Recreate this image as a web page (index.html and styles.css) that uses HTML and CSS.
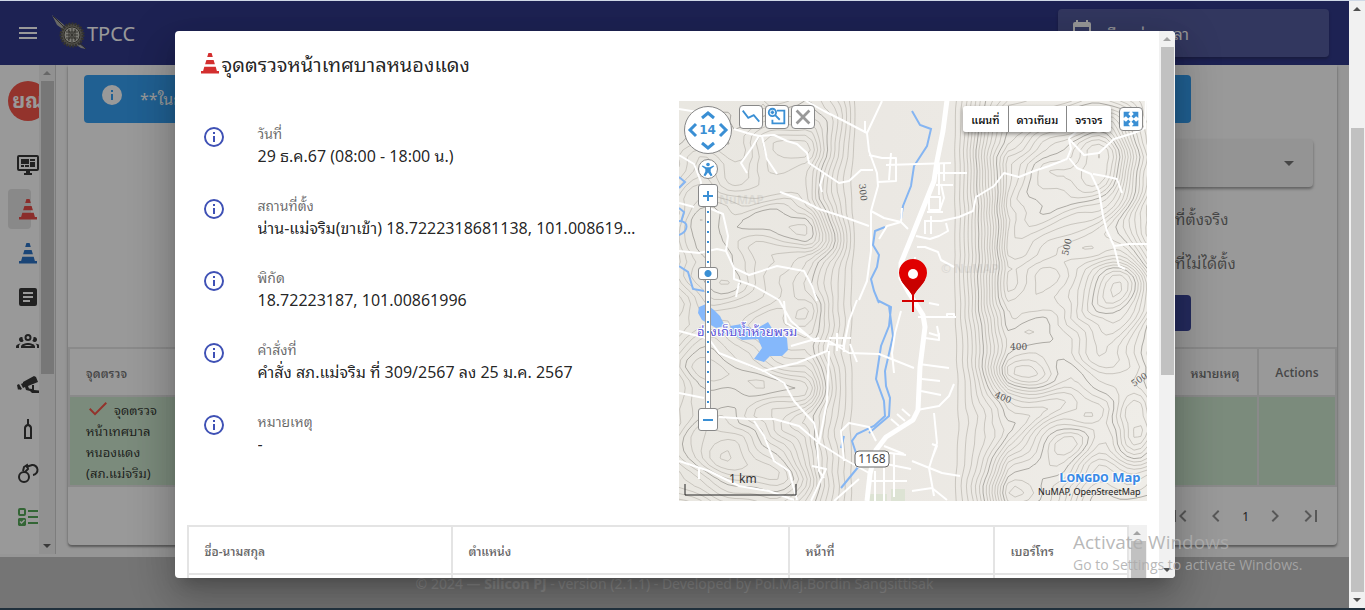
FILE: index.html
```html
<!DOCTYPE html>
<html lang="th">
<head>
<meta charset="utf-8">
<title>TPCC</title>
<link rel="stylesheet" href="styles.css">
</head>
<body>
<svg class="defs" aria-hidden="true">
  <symbol id="cone" viewBox="0 0 24 24"><path d="M10.400 2h3.200l1.200 4H9.200zM8.400 9h7.200l1.300 4.200H7.100zM6.300 15.700h11.400l1.200 4.300H21v2.500H3V20h2.100z"/></symbol>
  <symbol id="info" viewBox="0 0 24 24"><path d="M11 9h2V7h-2m1 13c-4.410 0-8-3.590-8-8s3.590-8 8-8 8 3.590 8 8-3.590 8-8 8m0-18a10 10 0 1 0 0 20 10 10 0 0 0 0-20m-1 15h2v-6h-2z"/></symbol>
  <symbol id="up" viewBox="0 0 16 16"><path d="M4 10h8L8 6z"/></symbol>
  <symbol id="down" viewBox="0 0 16 16"><path d="M4 6h8l-4 4z"/></symbol>
</svg>
<div class="window">
  <div class="app">
    <header class="bar">
      <button class="menu" aria-label="Menu"><svg viewBox="0 0 24 24"><path d="M3 6h18v2H3zm0 5h18v2H3zm0 5h18v2H3z"/></svg></button>
      <svg class="logo" viewBox="0 0 36 36">
        <path d="M0 0l11 9 4 4-3 2-7-5zM26 28l8 6-5-1-6-4z" fill="#a4a4a0"/>
        <path d="M1 1l33 33" stroke="#3a3830" stroke-width="1"/>
        <circle cx="20" cy="20" r="11" fill="#77756a" stroke="#45433c" stroke-width="3" stroke-dasharray="2 1"/>
        <circle cx="20" cy="20" r="8" fill="#c9c7bc" stroke="#3a382f"/>
        <path d="M14 17h12M14 20h12M14 23h12M17 14v12M20 13v14M23 14v12M16 15l8 10M24 15l-8 10" stroke="#47443c"/>
      </svg>
      <span class="brand">TPCC</span>
      <button class="date"><svg viewBox="0 0 24 24"><path d="M19 19H5V8h14m-3-7v2H8V1H6v2H5a2 2 0 0 0-2 2v14a2 2 0 0 0 2 2h14a2 2 0 0 0 2-2V5a2 2 0 0 0-2-2h-1V1m-1 11h-5v5h5z"/></svg><span>เลือกช่วงเวลา</span></button>
    </header>
    <div class="body">
      <nav class="drawer">
        <div class="items">
          <div class="avatar">ยณ</div>
          <a href="#" aria-label="Dashboard"><svg viewBox="0 0 24 24"><path d="M21 2H3a2 2 0 0 0-2 2v12a2 2 0 0 0 2 2h7v2H8v2h8v-2h-2v-2h7a2 2 0 0 0 2-2V4a2 2 0 0 0-2-2m0 14H3V4h18zM5 6h8v5H5zm9 0h5v2h-5zm0 3h5v5h-5zm-9 3h3v2H5zm4 0h4v2H9z"/></svg></a>
          <a href="#" class="active" aria-label="จุดตรวจ"><svg class="red"><use href="#cone"/></svg></a>
          <a href="#" aria-label="จุดตรวจอื่น"><svg class="blue"><use href="#cone"/></svg></a>
          <a href="#" aria-label="รายงาน"><svg viewBox="0 0 24 24"><path fill-rule="evenodd" d="M5 3h14a2 2 0 0 1 2 2v14a2 2 0 0 1-2 2H5a2 2 0 0 1-2-2V5a2 2 0 0 1 2-2zm2 4v2h10V7zm0 4v2h10v-2zm0 4v2h7v-2z"/></svg></a>
          <a href="#" aria-label="กลุ่ม"><svg viewBox="0 0 24 24"><path d="M12 5a3.500 3.500 0 1 0 0 7 3.500 3.500 0 0 0 0-7m0 2a1.500 1.500 0 1 1 0 3 1.500 1.500 0 0 1 0-3M5.500 8A2.500 2.500 0 0 0 3 10.500c0 .94.53 1.750 1.290 2.180a2.500 2.500 0 0 0 2.420 0c.37-.21.68-.51.91-.87A5.420 5.420 0 0 1 6.500 8.500v-.28C6.200 8.080 5.860 8 5.500 8m13 0c-.36 0-.7.080-1 .22v.28c0 1.200-.39 2.360-1.120 3.310.12.190.25.340.4.490a2.480 2.480 0 0 0 2.930.38A2.500 2.500 0 0 0 18.500 8M12 14c-2.340 0-7 1.170-7 3.500V19h14v-1.500c0-2.330-4.660-3.500-7-3.500m-7.290.55C2.780 14.780 0 15.760 0 17.500V19h3v-1.930c0-1.010.69-1.850 1.710-2.520m14.580 0c1.020.67 1.710 1.510 1.710 2.520V19h3v-1.500c0-1.740-2.780-2.720-4.710-2.950M12 16c1.530 0 3.240.5 4.230 1H7.770c.99-.5 2.700-1 4.230-1"/></svg></a>
          <a href="#" aria-label="กล้อง"><svg viewBox="0 0 24 24"><path d="M7 9l11-6 2 1 2 5-10 4 1 2.500 3 .5v-4h2v5l5 .5V20h-7l-2-2-4-1-1-3-2 .8zM1 12l2-1 3 5-2 1-1-1-1 1zM5 11l2-1 2 4-2 1z"/></svg></a>
          <a href="#" aria-label="แอลกอฮอล์"><svg viewBox="0 0 24 24"><path fill-rule="evenodd" d="M11 2h2v5c2 1 3 2 3 4v11H8V11c0-2 1-3 3-4zm1 7c-1 .5-2 1-2 2.500V20h4v-8.500c0-1.500-1-2-2-2.500z"/></svg></a>
          <a href="#" aria-label="กุญแจมือ"><svg viewBox="0 0 24 24" class="line"><circle cx="8" cy="16" r="5"/><path d="M7 10l1-4 3-2 1 4-3 3M10 6l6-2a5 5 0 1 1 1 10"/></svg></a>
          <a href="#" aria-label="รายการ"><svg viewBox="0 0 24 24" class="green"><path fill-rule="evenodd" d="M4 3h4a2 2 0 0 1 2 2v4a2 2 0 0 1-2 2H4a2 2 0 0 1-2-2V5a2 2 0 0 1 2-2zm0 2v4h4V5zM12 5h10v2H12zM12 11h10v2H12zM12 17h10v2H12zM3 13h6l1 1v6l-1 1H3l-1-1v-6zm.5 4l2 2 3.500-3.500-1-1-2.500 2.500-1-1z"/></svg></a>
        </div>
        <div class="scroll" aria-hidden="true"><svg><use href="#up"/></svg><i class="thumb long"></i><svg class="end"><use href="#down"/></svg></div>
      </nav>
      <main class="main">
        <section class="card">
          <div class="form">
            <div class="alert"><svg viewBox="0 0 24 24"><path d="M13 9h-2V7h2m0 10h-2v-6h2m-1-9a10 10 0 1 0 0 20 10 10 0 0 0 0-20"/></svg><span>**ในการค้นหา</span></div>
            <div class="combo"><select aria-label="สถานี"><option></option></select><svg viewBox="0 0 24 24"><path d="M7 10l5 5 5-5z"/></svg></div>
            <p class="opt">ที่ตั้งจริง</p>
            <p class="opt two">ที่ไม่ได้ตั้ง</p>
            <button class="go" aria-label="ค้นหา"></button>
          </div>
          <table class="list">
            <thead><tr><th class="c1">จุดตรวจ</th><th></th><th class="c3">หมายเหตุ</th><th class="c4">Actions</th></tr></thead>
            <tbody><tr><td><svg viewBox="0 0 24 24"><path d="M21 6.500L9 18.500l-6-6 1.400-1.400L9 15.700 19.600 5.100z"/></svg>จุดตรวจ<br>หน้าเทศบาล<br>หนองแดง<br>(สภ.แม่จริม)</td><td></td><td></td><td></td></tr></tbody>
          </table>
          <div class="pager">
            <button aria-label="First"><svg viewBox="0 0 24 24"><path d="M18.400 16.600L13.800 12l4.600-4.600L17 6l-6 6 6 6zM6 6h2v12H6z"/></svg></button>
            <button aria-label="Previous"><svg viewBox="0 0 24 24"><path d="M15.400 16.600L10.800 12l4.600-4.600L14 6l-6 6 6 6z"/></svg></button>
            <span>1</span>
            <button aria-label="Next"><svg viewBox="0 0 24 24"><path d="M8.600 16.600l4.600-4.600-4.600-4.600L10 6l6 6-6 6z"/></svg></button>
            <button aria-label="Last"><svg viewBox="0 0 24 24"><path d="M5.600 7.400l4.600 4.600-4.600 4.600L7 18l6-6-6-6zM16 6h2v12h-2z"/></svg></button>
          </div>
        </section>
      </main>
    </div>
    <footer class="foot"><span>© 2024 — <b>Silicon PJ</b> - version (2.1.1) - Developed by Pol.Maj.Bordin Sangsittisak</span></footer>
    <div class="overlay">
      <div class="dialog" role="dialog" aria-labelledby="title">
        <div class="pane">
          <h2 id="title"><svg><use href="#cone"/></svg>จุดตรวจหน้าเทศบาลหนองแดง</h2>
          <div class="cols">
            <dl class="facts">
              <div><svg><use href="#info"/></svg><dt>วันที่</dt><dd>29 ธ.ค.67 (08:00 - 18:00 น.)</dd></div>
              <div><svg><use href="#info"/></svg><dt>สถานที่ตั้ง</dt><dd>น่าน-แม่จริม(ขาเข้า) 18.7222318681138, 101.00861996</dd></div>
              <div><svg><use href="#info"/></svg><dt>พิกัด</dt><dd>18.72223187, 101.00861996</dd></div>
              <div><svg><use href="#info"/></svg><dt>คำสั่งที่</dt><dd>คำสั่ง สภ.แม่จริม ที่ 309/2567 ลง 25 ม.ค. 2567</dd></div>
              <div><svg><use href="#info"/></svg><dt>หมายเหตุ</dt><dd>-</dd></div>
            </dl>
            <div class="map">
              <svg class="terrain" viewBox="0 0 468 400" preserveAspectRatio="xMidYMid slice">
                <defs><linearGradient id="land"><stop offset="0" stop-color="#e9e7e1"/><stop offset=".45" stop-color="#ebe8e3"/><stop offset="1" stop-color="#efede8"/></linearGradient></defs>
                <rect width="468" height="400" fill="url(#land)"/>
                <path id="contours" class="contour"/>
                <path id="majors" class="contour major"/>
                <path fill="#dde3d4" d="M190 393h18v7h-18zM212 388h14v12h-14z"/>
                <path class="lake" d="M20 206l7-3 8 6 6 6 5 10-9 2-14-8-4-7zM40 232l14-2-3-5 12-2 12 6 14-8 5 8 14 8 1 12-6 6-12 0-6 6-10-3 8-11-4-9-16 1-7-5z"/>
                <g class="river">
                  <path d="M233 10l8 14 11 4-4 17-13 20-3 20-8 20-2 13M206 126l-10 4-2 14 6 10-2 12-6 12 3 12 5 12M198 199l14 7-2 19-8 20-5 33 8 22 1 15-11 10-17 8-5 7 4 12M210 205l4 30-8 35 1 15 4 12-1 18-20 17M180 365l-18 22M0 76l6 5-6 6M0 107l5 4-3 10M0 120c10 0 10 10 0 14M0 165l9 6 5 17 11 2M165 335l-3 12"/>
                </g>
                <g class="road">
                  <path d="M55 28l13 4 12 3 15-1 13 6 10 3 10 9 2 10 15 10 15 10 10-2 12-11h12M80 35l-8 13-10 14 6 10M83 35l5 23 10 15M145 72l-4 12 2 7M101 91l19 7 20 10 25 8 25 9M0 8l25 4M0 54l15 9 7 18-2 20M0 102l15 4M30 107l14 6 5 22-2 15 8 17 15 7 28-9 27 5 8 15 5 15M0 150l20 2 18-4 9 2M55 167v11l20 7 25 14M60 182l-3 14"/>
                  <path d="M127 0l18 10 20 10 23 12 15-32M188 32l2 18 8 22 1 13-7 25v40l-4 30-8 19M190 54l13 3 14 0v23l-18 1M212 52l-2 27M207 64l65-2M192 110l13 7 17 4 7 7M222 121l1-14M222 121l-14 4-8 13M186 32v-12"/>
                  <path d="M245 120h17l18-4 14-6 3-14 18-11 10-13 15 4 15-6 15-5 18-7 4-10-2-10 15 16 15-2 15-14 20-6 11-5 1-30M390 57l8 10 14 6 8 17 4 25 4 15 7 15 15-2 18 0M435 145l5 20 6 3M414 73l11 2 13 3 5 14M390 37l8-7"/>
                  <path d="M254 72h34M260 62v32M257 84h17M265 62v18M248 111h16M246 121v12M252 115v18M237 135l14 3 9-3 9-5-2-8M238 146h8l13 5 3 8 13 7M236 156v22M248 111l12 0 5-14-3-14M250 96h11v13h-11z"/>
                  <path d="M0 230l30 8 10 14 20 8 25 10 20 12 10 18 20 22 5 20 25 16 25 14M83 270l35-8 30-12 2-10M100 199l12 21 23 20 15 0 20 12 30 1 35 14M178 199l-8 21-5 25-15-2M150 250l-2 50-8 42M40 316l30 2 25 0 25 7 20 17M75 320l10 15 10 25 15 10 8 29M0 292l25 5M0 360l30 10 30 15 30 5 25 9M20 366v12M138 342l2 28 5 7M133 365l14 3-15 32M180 378l-25 22M165 360l-3-30 8-8 20 4 7 14M150 237h22M158 232v18M165 236v15M171 243l7 18M112 245l28-8M105 200l2 22 30 18M215 272l-2-20 3-20 6-22"/>
                  <path d="M239 216h38M250 202l10 2M250 232l10 3-2-10M240 263l30 4M243 278l18 2M242 290l20 4M238 309l22-4 10-10 5-12M255 312l3 30-8 25 5 28M233 360l30 12 18 3M233 390l20-3 15 12M253 343l5 2-6 15M192 360l40 8M195 350l32 4M196 370v30M205 356v44M215 352v44M192 380h36M205 345l20 8M268 217v-4h7v4M220 325l-8-7M226 320l-8-7M231 315l-8-7M246 237l14 2v-7"/>
                </g>
                <path class="highway" d="M268-1l-4 31-6 30-3 20-10 25-12 30-11 27v15l8 15 14 22 2 12-5 40-2 43-5 10-27 17-10 13-6 24-3 27"/>
                <g class="contour-label">
                  <text transform="translate(180 83) rotate(84)">300</text>
                  <text x="331" y="249">400</text>
                  <text transform="translate(315 296) rotate(22)">400</text>
                  <text transform="translate(389 155) rotate(-78)">500</text>
                  <text transform="translate(455 286) rotate(-35)">500</text>
                </g>
                <g class="faint"><text x="40" y="103">NuMAP</text><text x="262" y="172">© NuMAP</text></g>
                <text class="water-name" x="18" y="235">อ่างเก็บน้ำห้วยพรม</text>
                <rect x="176" y="350" width="34" height="16" rx="4" fill="#fff" stroke="#666"/>
                <text class="shield" x="193" y="362">1168</text>
                <path d="M234 196c-3-8-14-15-14-24a14 14 0 0 1 28 0c0 9-11 16-14 24z" fill="#e00000"/>
                <path d="M234 196c-2-6-9-11-12-17l24 0c-3 6-10 11-12 17z" fill="#c80000"/>
                <circle cx="234" cy="173" r="5" fill="#fff"/>
                <path d="M223 200h22M234 190v21" stroke="#d40000" stroke-width="2"/>
                <path class="scale" d="M6 383v11h111v-11"/>
                <text class="km" x="50" y="382">1 km</text>
              </svg>
              <div class="dial"><svg viewBox="0 0 48 48"><path d="M18 12l6-5 6 5M18 37l6 5 6-5M12 18l-6 6 6 6M36 18l6 6-6 6" class="arrows"/></svg><b>14</b></div>
              <button class="person" aria-label="Locate"><svg viewBox="0 0 20 20"><circle cx="10" cy="5" r="2"/><path d="M4 6l4 2h4l4-2 1 1-4 3v3l2 4-2 1-3-4-3 4-2-1 2-4v-3L3 7z"/></svg></button>
              <div class="zoom"><button aria-label="Zoom in"><svg viewBox="0 0 18 20"><path d="M4 10h10M9 5v10"/></svg></button><div class="track"><i></i></div><button aria-label="Zoom out"><svg viewBox="0 0 18 20"><path d="M4 10h10"/></svg></button></div>
              <div class="tools">
                <button aria-label="Line"><svg viewBox="0 0 24 24"><path d="M3 5l6 8 6-3 6 7" fill="none" stroke="#3a8fd4" stroke-width="2"/></svg></button>
                <button aria-label="Zoom area"><svg viewBox="0 0 24 24" class="outline"><path d="M12 5h8v14H7v-4M10 10l5 5"/><circle cx="7" cy="7" r="4"/><path d="M5 7h4M7 5v4"/></svg></button>
                <button aria-label="Clear"><svg viewBox="0 0 24 24"><path d="M5 5l14 14M19 5L5 19" stroke="#999" stroke-width="3"/></svg></button>
              </div>
              <div class="modes">
                <div class="seg"><button>แผนที่</button><button>ดาวเทียม</button><button>จราจร</button></div>
                <button class="full" aria-label="Full screen"><svg viewBox="0 0 24 24"><path d="M4 4h7L9 6.500l2.500 2.500L9 11.500 6.500 9 4 11zM20 4h-7l2 2.500L12.500 9l2.500 2.500L17.500 9l2.500 2zM4 20h7l-2-2.500 2.500-2.500L9 12.500 6.500 15 4 13zM20 20h-7l2-2.500-2.500-2.500 2.500-2.500 2.500 2.500 2.500-2z"/></svg></button>
              </div>
              <div class="credit"><b><span>Longdo</span> Map</b><small>NuMAP, OpenStreetMap</small></div>
            </div>
          </div>
          <div class="people">
            <table>
              <thead><tr><th class="w1">ชื่อ-นามสกุล</th><th class="w2">ตำแหน่ง</th><th class="w3">หน้าที่</th><th>เบอร์โทร</th></tr></thead>
              <tbody><tr><td></td><td></td><td></td><td></td></tr></tbody>
            </table>
            <div class="scroll" aria-hidden="true"><svg><use href="#up"/></svg><i class="thumb"></i></div>
          </div>
        </div>
        <div class="scroll" aria-hidden="true"><svg><use href="#up"/></svg><i class="thumb long"></i><svg class="end"><use href="#down"/></svg></div>
      </div>
    </div>
  </div>
  <div class="scroll page" aria-hidden="true"><svg class="on"><use href="#up"/></svg><i class="gap"></i><i class="thumb"></i><svg class="on"><use href="#down"/></svg></div>
</div>
<aside class="activate"><strong>Activate Windows</strong><span>Go to Settings to activate Windows.</span></aside>
<script src="contours.js"></script>
</body>
</html>
```
FILE: styles.css
```css
* { box-sizing: border-box; }
body { margin: 0; font-family: "Noto Sans", "Noto Sans Thai Looped", "Noto Looped Thai", Loma, Waree, Garuda, sans-serif; font-size: 16px; color: rgba(0,0,0,.87); }
button { font: inherit; border: 0; padding: 0; background: none; color: inherit; }
svg { width: 24px; height: 24px; flex: none; fill: currentColor; }
.defs { position: absolute; width: 0; height: 0; }
.window { display: flex; height: 100vh; border-top: 1px solid #cfd8e6; border-bottom: 2px solid #20303c; overflow: hidden; }
.app { position: relative; flex: 1; min-width: 0; display: flex; flex-direction: column; background: #fff; }
.bar { height: 64px; flex: none; display: flex; align-items: center; background: #1a237e; color: #fff; padding: 0 20px 0 16px; }
.menu, .menu svg { width: 24px; height: 24px; }
.logo { width: 36px; height: 36px; margin-left: 12px; }
.brand { font-size: 20px; margin-left: -1px; flex: 1; }
.date { width: 271px; height: 48px; display: flex; align-items: center; gap: 8px; padding: 0 12px; border-radius: 4px; background: #424a94; text-align: left; box-shadow: 0 2px 3px rgba(0,0,0,.3); }
.date svg { margin-bottom: 4px; }
.body { flex: 1; min-height: 0; display: flex; background: #fafafa; overflow: hidden; }
.drawer { width: 56px; flex: none; display: flex; margin-bottom: 3px; background: #fff; border-right: 1px solid #ccc; }
.items { flex: 1; min-width: 0; overflow: hidden; padding: 16px 8px; }
.avatar { width: 40px; height: 40px; border-radius: 50%; background: #f44336; color: #fff; font-size: 20px; font-weight: 700; line-height: 40px; text-align: center; margin-bottom: 24px; }
.items a { display: flex; align-items: center; height: 40px; margin-bottom: 4px; padding-left: 8px; border-radius: 4px; color: #222; }
.items a.active { background: #e2e2e2; }
.red { color: #e53935; } .blue { color: #1565c0; } .green { color: #43a047; }
svg.line { fill: none; stroke: currentColor; stroke-width: 2; }
.scroll { width: 16px; flex: none; display: flex; flex-direction: column; background: #f1f1f1; color: #a3a3a3; }
.scroll svg { width: 16px; height: 16px; }
.scroll .end { margin-top: auto; color: #505050; }
.thumb { flex: 1; margin: 0 1px 0 2px; background: #c1c1c1; }
.thumb.long { flex: 0 0 60%; }
.page .on { color: #505050; }
.page .gap { height: 111px; }
.main { flex: 1; min-width: 0; padding: 0 12px; }
.card { height: calc(100% - 12px); display: flex; flex-direction: column; background: #fff; border-radius: 0 0 4px 4px; box-shadow: 0 2px 2px rgba(0,0,0,.35), 0 1px 4px rgba(0,0,0,.2); }
.form { padding: 10px 24px 16px 16px; display: flex; flex-direction: column; align-items: flex-end; }
.alert { align-self: stretch; height: 48px; margin-right: 122px; padding: 0 16px; display: flex; gap: 16px; border-radius: 4px; background: #2196f3; color: #fff; line-height: 48px; }
.alert svg { margin-top: 8px; }
.combo { position: relative; width: 50%; height: 48px; margin-top: 16px; }
.combo select { width: 100%; height: 100%; appearance: none; border: 0; border-radius: 4px; background: #f5f5f5; box-shadow: 0 2px 3px rgba(0,0,0,.4); }
.combo svg { position: absolute; right: 12px; top: 12px; color: #666; }
.opt { width: 138px; margin: 20px 0 0; line-height: 24px; color: rgba(0,0,0,.6); }
.go { width: 200px; height: 36px; margin: 20px 122px 0 0; border-radius: 4px; background: #283593; }
table { width: 100%; border-collapse: collapse; table-layout: fixed; }
th { font-size: 12px; font-weight: 600; color: rgba(0,0,0,.6); text-align: left; padding: 0 16px; height: 48px; border: 2px solid #e4e4e4; }
.c1 { width: 200px; } .c3 { width: 86px; } .c4 { width: 78px; }
.list td { height: 90px; padding: 0 16px; border: 2px solid #e4e4e4; background: #c8e6c9; font-size: 13px; line-height: 21px; }
.list td svg { color: #f44336; margin: -2px 4px -6px 0; }
.list .c3, .list .c4 { padding: 0; text-align: center; }
.pager { flex: 1; display: flex; align-items: center; justify-content: flex-end; gap: 16px; padding: 0 16px; font-size: 12px; color: #666; }
.pager button { height: 24px; color: #888; }
.pager button svg { margin: 0 -2px; }
.pager span { color: #222; }
.foot { height: 51px; flex: none; background: #bdbdbd; text-align: center; color: rgba(255,255,255,.6); font-size: 14px; line-height: 54px; overflow: hidden; }
.overlay { position: absolute; inset: 0; display: flex; justify-content: center; align-items: center; background: rgba(33,33,33,.46); }
.dialog { width: 1000px; max-width: 90%; height: 90%; display: flex; overflow: hidden; border-radius: 4px; background: #fff; box-shadow: 0 11px 15px -7px rgba(0,0,0,.2), 0 24px 38px 3px rgba(0,0,0,.14), 0 9px 46px 8px rgba(0,0,0,.12); }
.pane { flex: 1; min-width: 0; overflow: hidden; padding: 16px 12px 0; }
h2 { display: flex; align-items: center; margin: 0; padding-left: 11px; height: 32px; font-size: 20px; font-weight: 400; }
h2 svg { color: #d32f2f; }
.cols { display: flex; gap: 24px; padding-top: 22px; }
.facts { flex: 1; min-width: 0; margin: 0; padding: 0 16px 0 15px; }
.facts div { height: 72px; display: grid; grid-template-columns: 24px 1fr; column-gap: 32px; padding-top: 22px; grid-template-rows: 22px 22px; }
.facts svg { margin-top: 2px; grid-row: 1 / 3; color: #3f51b5; }
.facts dt { font-size: 14px; line-height: 22px; color: rgba(0,0,0,.6); }
.facts dd { margin: 0; font-size: 16px; line-height: 22px; white-space: nowrap; overflow: hidden; text-overflow: ellipsis; }
.map { position: relative; flex: 0 1 468px; height: 400px; overflow: hidden; }
.terrain { width: 100%; height: 100%; display: block; }
.contour { fill: none; stroke: #c0bdb5; stroke-width: 1; opacity: .8; }
.major { stroke: #9c9a94; }
.lake { fill: #85b8fb; }
.river path { fill: none; stroke: #85b5f2; stroke-width: 2; }
.road path { fill: none; stroke: #fff; stroke-width: 2; stroke-linejoin: round; }
.highway { fill: none; stroke: #fff; stroke-width: 5; stroke-linejoin: round; }
.contour-label { font: 9px "DejaVu Serif", serif; fill: #555; }
.faint { font: 700 12px "Open Sans", sans-serif; fill: #777; opacity: .12; }
.water-name { font-size: 13px; fill: #5b55d6; stroke: #fff; stroke-width: 2px; paint-order: stroke; }
.shield { font-size: 12px; fill: #444; text-anchor: middle; }
.scale { fill: none; stroke: #222; stroke-width: 1; }
.km { font-size: 12px; fill: #333; }
.map button, .dial { background: #fff; color: #3a8fd4; }
.dial { position: absolute; left: 5px; top: 5px; width: 48px; height: 48px; border: 1px solid #888; border-radius: 50%; text-align: center; font: 700 12px/46px "DejaVu Sans", sans-serif; }
.dial svg { position: absolute; inset: -1px; width: 48px; height: 48px; }
.arrows { fill: none; stroke: #3a8fd4; stroke-width: 3; }
.map .person { position: absolute; left: 19px; top: 58px; width: 20px; height: 20px; border: 1px solid #888; border-radius: 50%; }
.person svg { display: block; width: 18px; height: 18px; }
.zoom { position: absolute; left: 19px; top: 83px; width: 20px; display: flex; flex-direction: column; align-items: center; }
.zoom button { width: 20px; height: 23px; border: 1px solid #888; border-radius: 3px; }
.zoom svg { display: block; width: 18px; height: 20px; fill: none; stroke: #3a8fd4; stroke-width: 2; }
.track { width: 6px; height: 201px; position: relative; border: 1px solid #999; border-width: 0 1px; background: radial-gradient(circle, #3a8fd4 0 1px, #fff 1px) 0 0 / 4px 10px; }
.track i { position: absolute; left: -8px; top: 60px; width: 20px; height: 13px; border: 1px solid #888; border-radius: 3px; background: radial-gradient(circle, #3a8fd4 0 3px, #fff 4px); }
.tools { position: absolute; left: 60px; top: 4px; display: flex; gap: 2px; }
.tools button, .modes .full { width: 24px; height: 24px; border: 1px solid #888; border-radius: 4px; }
.tools svg, .full svg { display: block; width: 22px; height: 22px; }
.tools .outline { fill: none; stroke: #3a8fd4; stroke-width: 2; }
.modes { position: absolute; right: 4px; top: 5px; display: flex; align-items: center; gap: 8px; }
.seg { display: flex; border-radius: 3px; overflow: hidden; box-shadow: 0 2px 4px rgba(0,0,0,.4); }
.modes .seg button { height: 26px; padding: 0 8px; font-size: 11px; font-weight: 500; color: #000; border-left: 1px solid #888; }
.modes .seg button:first-child { border: 0; }
.credit { position: absolute; right: 6px; bottom: 2px; display: flex; flex-direction: column; align-items: flex-end; }
.credit b { font: 700 13px/16px "Noto Sans", sans-serif; color: #3a8ae6; text-shadow: 0 0 2px #fff, 0 0 2px #fff, 1px 1px 1px #fff, -1px -1px 1px #fff; }
.credit span { font-variant: small-caps; }
.credit small { font-size: 9px; line-height: 14px; color: #222; }
.people { display: flex; margin-top: 24px; }
.people table { flex: 1; }
.people .scroll { width: 18px; }
.people td { height: 60px; border: 2px solid #e4e4e4; }
.w1 { width: 264px; } .w2 { width: 337px; } .w3 { width: 205px; }
.activate { position: absolute; right: 56px; bottom: 35px; display: flex; flex-direction: column; width: 236px; font-family: "Open Sans", sans-serif; color: rgba(172,172,172,.85); pointer-events: none; white-space: nowrap; }
.activate strong { font-weight: 400; font-size: 19px; line-height: 26px; }
.activate span { font-size: 14px; line-height: 20px; }
```
FILE: contours.js
```js
// Traces elevation contours of the terrain with marching squares.
const hills = [
  [110, 50, 32, 26, 5], [20, 120, 26, 60, 5], [90, 120, 45, 25, 6], [150, 138, 26, 18, 5],
  [170, 20, 25, 30, 4], [60, 180, 40, 25, 5], [30, 260, 45, 30, 6], [115, 285, 40, 18, 5],
  [40, 345, 45, 40, 8], [100, 380, 35, 30, 5], [130, 215, 25, 22, 3],
  [380, 60, 55, 50, 9], [350, 130, 45, 50, 7], [440, 180, 32, 28, 9], [430, 60, 28, 55, 7],
  [343, 272, 32, 22, 7], [430, 260, 40, 38, 7], [385, 342, 30, 22, 7], [460, 330, 22, 35, 8],
  [340, 390, 45, 28, 7], [410, 210, 60, 30, 5], [300, 40, 22, 50, 4], [310, 200, 30, 50, 5]
];
const height = (x, y) => {
  let h = 0;
  for (const [cx, cy, rx, ry, a] of hills) {
    h += a * Math.exp(-(((x - cx) / rx) ** 2 + ((y - cy) / ry) ** 2) / 1.6);
  }
  const wobble = Math.sin(x / 13 + Math.sin(y / 17) * 2) * Math.cos(y / 11 + x / 29);
  const slope = x > 270 ? Math.min(1, (x - 270) / 60) : x < 180 ? Math.min(1, (180 - x) / 50) : 0;
  return h * slope + wobble * 0.6 * slope + slope * 4;
};
const step = 7;
const paths = ["", ""];
for (let x = 0; x < 468; x += step) {
  for (let y = 0; y < 400; y += step) {
    const p = [[x, y], [x + step, y], [x + step, y + step], [x, y + step]];
    const v = p.map(q => height(q[0], q[1]));
    for (let k = 1; k < 40; k++) {
      const level = k * 0.7;
      const hits = [];
      for (let i = 0; i < 4; i++) {
        const j = (i + 1) % 4;
        if ((v[i] < level) !== (v[j] < level)) {
          const t = (level - v[i]) / (v[j] - v[i]);
          hits.push([p[i][0] + t * (p[j][0] - p[i][0]), p[i][1] + t * (p[j][1] - p[i][1])]);
        }
      }
      for (let i = 0; i + 1 < hits.length; i += 2) {
        paths[k % 7 === 0 ? 1 : 0] += "M" + hits[i].map(n => n.toFixed(1)) + "L" + hits[i + 1].map(n => n.toFixed(1));
      }
    }
  }
}
document.getElementById("contours").setAttribute("d", paths[0]);
document.getElementById("majors").setAttribute("d", paths[1]);
```
